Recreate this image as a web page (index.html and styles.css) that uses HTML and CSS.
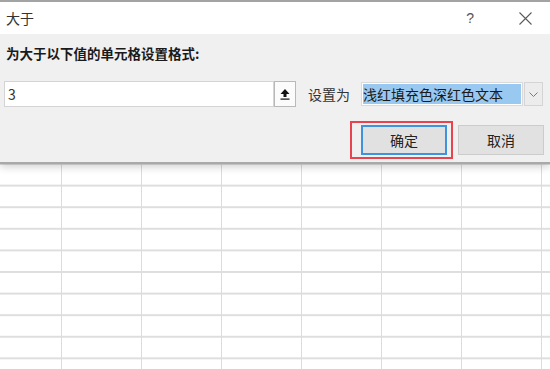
FILE: index.html
```html
<!DOCTYPE html>
<html lang="zh">
<head>
<meta charset="utf-8">
<title>大于</title>
<link rel="stylesheet" href="styles.css">
</head>
<body>
<div class="page">
  <div class="dialog">
    <div class="titlebar">
      <span class="title">大于</span>
      <span class="help">?</span>
      <svg class="close" width="13" height="13" viewBox="0 0 13 13"><path d="M0.5 0.5 L12.5 12.5 M12.5 0.5 L0.5 12.5" stroke="#5a5a5a" stroke-width="1.1" fill="none"/></svg>
    </div>
    <div class="body">
      <div class="label">为大于以下值的单元格设置格式:</div>
      <div class="row">
        <div class="input">3</div>
        <div class="pick">
          <svg width="10" height="11" viewBox="0 0 10 11"><path d="M5 0 L9.5 5 L6.5 5 L6.5 8 L3.5 8 L3.5 5 L0.5 5 Z" fill="#111"/><rect x="0.5" y="9.5" width="9" height="1.2" fill="#111"/></svg>
        </div>
        <span class="setas">设置为</span>
        <div class="select">
          <div class="field"><span class="hl">浅红填充色深红色文本</span></div>
          <div class="drop"><svg width="9" height="5" viewBox="0 0 9 5"><path d="M0.5 0.5 L4.5 4.5 L8.5 0.5" stroke="#7a7a7a" stroke-width="1" fill="none"/></svg></div>
        </div>
      </div>
      <div class="buttons">
        <div class="mark"><button class="btn primary">确定</button></div>
        <button class="btn">取消</button>
      </div>
    </div>
  </div>
  <div class="sheet"></div>
</div>
</body>
</html>
```

FILE: styles.css
```css
html, body {
  margin: 0;
  padding: 0;
  background: #fff;
}
body {
  font-family: "Noto Sans CJK SC", "Noto Sans", sans-serif;
  color: #262626;
}
.page {
  width: 550px;
  height: 369px;
  overflow: hidden;
  display: flex;
  flex-direction: column;
}
.dialog {
  position: relative;
  z-index: 1;
  box-shadow: 0 3px 8px rgba(0, 0, 0, 0.18);
  border-bottom: 2px solid #a9a9a9;
}
.titlebar {
  height: 32px;
  border-top: 2px solid #a3a3a3;
  background: #fff;
  display: flex;
  align-items: center;
  padding: 0 0 0 6px;
}
.title {
  font-size: 14px;
  line-height: 20px;
  color: #333;
  flex: 1;
}
.help {
  font-family: "Liberation Sans", sans-serif;
  font-size: 14px;
  color: #555;
  margin-right: 45px;
}
.close {
  margin-right: 18px;
}
.body {
  background: #f0f0f0;
  height: 128px;
  box-sizing: border-box;
  padding: 9px 6px 0 4px;
}
.label {
  font-size: 13.5px;
  font-weight: bold;
  line-height: 20px;
  padding-left: 2px;
  color: #1a1a1a;
}
.row {
  display: flex;
  align-items: center;
  margin-top: 18px;
  height: 26px;
}
.input {
  width: 270px;
  height: 26px;
  box-sizing: border-box;
  background: #fff;
  border: 1px solid #d4d4d4;
  font-size: 14px;
  line-height: 24px;
  padding-left: 3px;
  color: #333;
}
.pick {
  width: 22px;
  height: 26px;
  box-sizing: border-box;
  background: #fbfbfb;
  border: 1px solid #b9b9b9;
  display: flex;
  align-items: center;
  justify-content: center;
}
.setas {
  font-size: 14px;
  margin-left: 12px;
  color: #333;
}
.select {
  margin-left: 11px;
  display: flex;
  height: 24px;
}
.field {
  width: 162px;
  height: 24px;
  box-sizing: border-box;
  border: 1px solid #dadada;
  background: #fff;
  padding: 1px;
}
.hl {
  display: block;
  height: 20px;
  background: #99c9f0;
  font-size: 14px;
  line-height: 20px;
  color: #1a1a1a;
}
.drop {
  width: 19px;
  height: 24px;
  box-sizing: border-box;
  margin-left: 1px;
  background: #ececec;
  border: 1px solid #d4d4d4;
  display: flex;
  align-items: center;
  justify-content: center;
}
.buttons {
  display: flex;
  justify-content: flex-end;
  align-items: center;
  margin-top: 14px;
  gap: 5px;
}
.mark {
  border: 2px solid #e8444f;
  padding: 2px 4px 2px 9px;
}
.btn {
  width: 86px;
  height: 30px;
  box-sizing: border-box;
  background: #e1e1e1;
  border: 1px solid #cccccc;
  font-family: "Noto Sans CJK SC", sans-serif;
  font-size: 14px;
  color: #222;
  padding: 0;
  margin: 0;
}
.btn.primary {
  border: 2px solid #3f93de;
}
.sheet {
  flex: 1;
  background-color: #fff;
  background-image:
    linear-gradient(to right, #dcdcdc 0, #dcdcdc 1.5px, transparent 1.5px),
    linear-gradient(to bottom, transparent 20px, #dedede 20px, #dedede 21.6px);
  background-size: 80px 100%, 100% 21.6px;
  background-position: 61px 0, 0 1px;
  background-repeat: repeat-x, repeat-y;
}
```
